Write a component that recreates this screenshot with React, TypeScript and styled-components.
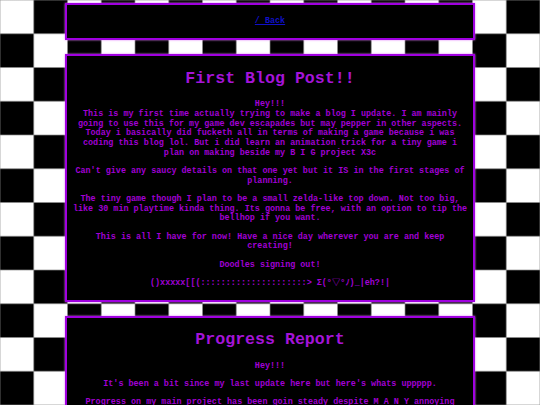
import styled, { createGlobalStyle } from "styled-components";

const GlobalStyle = createGlobalStyle`
  html, body {
    margin: 0;
    padding: 0;
  }

  body {
    background-color: #000;
    background-image:
      linear-gradient(90deg, rgba(140, 140, 140, 0.7) 1px, transparent 1px),
      linear-gradient(rgba(140, 140, 140, 0.7) 1px, transparent 1px),
      conic-gradient(#000 0 25%, #fff 0 50%, #000 0 75%, #fff 0);
    background-size: 33.75px 33.75px, 33.75px 33.75px, 67.5px 67.5px;
    background-position: -0.5px 0, 0 -0.5px, 0 0;
    font-family: "Liberation Mono", "Courier New", "Noto Sans CJK JP", monospace;
  }
`;

const Page = styled.main`
  width: 410px;
  margin: 0 auto;
  padding: 3px 0 20px;
  display: flex;
  flex-direction: column;
  gap: 14px;
`;

const Box = styled.section`
  box-sizing: border-box;
  background: #000;
  border: 2px solid #a000e0;
  box-shadow: 0 0 2px #e27dff;
  padding: 0 5px;
`;

const NavBox = styled(Box)`
  height: 37px;
  display: flex;
  align-items: center;
  justify-content: center;
`;

const BackLink = styled.a`
  color: #1010c8;
  font-size: 8.44px;
  font-weight: bold;
  line-height: 9.67px;
  text-decoration: underline;
`;

const Post = styled(Box)`
  padding-bottom: 2.5px;
  text-align: center;
`;

const Title = styled.h1`
  margin: 13.6px 0 12px;
  color: #a414d8;
  font-size: 16.6px;
  font-weight: bold;
  line-height: 18.8px;
`;

const Para = styled.p`
  margin: 8.6px 0;
  color: #a000d4;
  font-size: 8.44px;
  font-weight: bold;
  line-height: 9.67px;
`;

export default function App() {
  return (
    <>
      <GlobalStyle />
      <Page>
        <NavBox>
          <BackLink href="#">/ Back</BackLink>
        </NavBox>

        <Post>
          <Title>First Blog Post!!</Title>
          <Para>
            Hey!!!
            <br />
            This is my first time actually trying to make a blog I update. I am
            mainly going to use this for my game dev escapades but may pepper in
            other aspects. Today i basically did fucketh all in terms of making a
            game because i was coding this blog lol. But i did learn an animation
            trick for a tiny game i plan on making beside my B I G project X3c
          </Para>
          <Para>
            Can't give any saucy details on that one yet but it IS in the first
            stages of planning.
          </Para>
          <Para>
            The tiny game though I plan to be a small zelda-like top down. Not
            too big, like 30 min playtime kinda thing. Its gonna be free, with an
            option to tip the bellhop if you want.
          </Para>
          <Para>
            This is all I have for now! Have a nice day wherever you are and keep
            creating!
          </Para>
          <Para>Doodles signing out!</Para>
          <Para>()xxxxx[[(:::::::::::::::::::::&gt; Σ(°▽°ﾉ)_|eh?!|</Para>
        </Post>

        <Post>
          <Title>Progress Report</Title>
          <Para>Hey!!!</Para>
          <Para>It's been a bit since my last update here but here's whats uppppp.</Para>
          <Para>
            Progress on my main project has been goin steady despite M A N Y
            annoying setbacks. Art is coming along and the first area is almost
            playable from start to finish.
          </Para>
          <Para>More soon!</Para>
        </Post>
      </Page>
    </>
  );
}
